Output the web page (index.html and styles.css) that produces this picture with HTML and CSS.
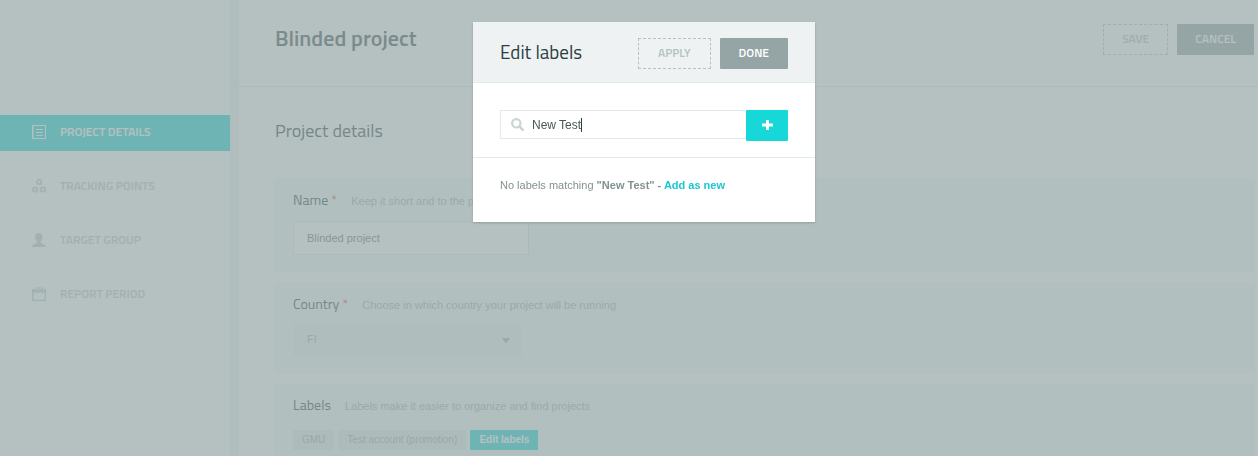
FILE: index.html
```html
<!DOCTYPE html>
<html lang="en">
<head>
    <meta charset="UTF-8">
    <meta name="viewport" content="width=device-width, initial-scale=1.0">
    <title>Blinded project</title>
    <link rel="stylesheet" href="styles.css">
</head>
<body class="modal-open">

    <div class="page">
        <nav class="sidebar">
            <a href="#details" class="nav-item active">
                <svg width="14" height="14" viewBox="0 0 14 14" fill="none" stroke="currentColor">
                    <path d="M.5.5h13v13H.5z"/>
                    <path d="M1.500 1v12" stroke-opacity=".5"/>
                    <path d="M4 4.500h7M4 7.500h7M4 10.500h7"/>
                </svg>
                Project details
            </a>
            <a href="#tracking" class="nav-item">
                <svg width="14" height="14" viewBox="0 0 14 14" fill="none" stroke="currentColor" stroke-width="1.8">
                    <circle cx="7.2" cy="3" r="2.2"/>
                    <circle cx="3.1" cy="10.500" r="2.2"/>
                    <circle cx="10.900" cy="10.500" r="2.2"/>
                </svg>
                Tracking points
            </a>
            <a href="#target" class="nav-item">
                <svg width="14" height="14" viewBox="0 0 14 14" fill="currentColor">
                    <path d="M6.7 0C9 0 10.400 1.500 10.400 4c0 2-.8 3.600-1.700 4.500v1.200c.5 1 5.300 1.300 5.300 4.300H0c0-3 4.500-3.300 5-4.300V8.500C4 7.600 3.200 6 3.200 4 3.200 1.500 4.500 0 6.700 0z"/>
                </svg>
                Target group
            </a>
            <a href="#period" class="nav-item">
                <svg width="14" height="14" viewBox="0 0 14 14" fill="currentColor">
                    <path fill-rule="evenodd" d="M0 2h3v1.500h1.500V2h2v1.500h1.500V2h2v1.500h1.500V2H14v12H0zM1.300 5.500v7.200h11.400V5.500z"/>
                    <path d="M3.700 0h1.400v2.500H3.700zM6.700 0h1.400v2.500H6.700zM9.700 0h1.400v2.500H9.700z"/>
                </svg>
                Report period
            </a>
        </nav>

        <main class="content">
            <header class="topbar">
                <h1>Blinded project</h1>
                <div class="actions">
                    <button type="button" class="btn btn-dashed">Save</button>
                    <button type="button" class="btn btn-solid">Cancel</button>
                </div>
            </header>

            <form class="details" id="details">
                <h2>Project details</h2>

                <div class="card">
                    <div class="card-head">
                        <label for="name">Name <span class="required">*</span></label>
                        <span class="hint">Keep it short and to the point</span>
                    </div>
                    <input type="text" id="name" name="name" class="text-input" value="Blinded project">
                </div>

                <div class="card">
                    <div class="card-head">
                        <label for="country">Country <span class="required">*</span></label>
                        <span class="hint">Choose in which country your project will be running</span>
                    </div>
                    <div class="select-wrap">
                        <select id="country" name="country">
                            <option>FI</option>
                        </select>
                        <svg width="8" height="5" viewBox="0 0 8 5" fill="currentColor"><path d="M0 0h8L4.500 5h-1z"/></svg>
                    </div>
                </div>

                <div class="card">
                    <div class="card-head">
                        <span class="card-title">Labels</span>
                        <span class="hint">Labels make it easier to organize and find projects</span>
                    </div>
                    <div class="tags">
                        <span class="tag">GMU</span>
                        <span class="tag">Test account (promotion)</span>
                        <button type="button" class="tag tag-edit">Edit labels</button>
                    </div>
                </div>
            </form>
        </main>
    </div>

    <div class="overlay">
        <div class="modal" role="dialog" aria-labelledby="modal-title">
            <header class="modal-head">
                <h3 id="modal-title">Edit labels</h3>
                <div class="actions">
                    <button type="button" class="btn btn-dashed">Apply</button>
                    <button type="button" class="btn btn-solid">Done</button>
                </div>
            </header>
            <div class="search-row">
                <label class="search">
                    <svg width="13" height="13" viewBox="0 0 13 13" fill="none" stroke="currentColor">
                        <circle cx="5.300" cy="5.300" r="4.200" stroke-width="2.200"/>
                        <path d="M8.500 8.500l3.300 3.300" stroke-width="2.600" stroke-linecap="round"/>
                    </svg>
                    <input type="text" id="label-search" aria-label="Search labels" value="New Test">
                    <span class="caret"></span>
                </label>
                <button type="button" class="btn-add" aria-label="Add label">
                    <svg width="11" height="10" viewBox="0 0 11 10" fill="none" stroke="currentColor" stroke-width="3"><path d="M5.500 0v10M0 5h11"/></svg>
                </button>
            </div>
            <p class="no-match">No labels matching <strong>"New Test" - <a href="#add">Add as new</a></strong></p>
        </div>
    </div>

</body>
</html>
```

FILE: styles.css
```css
* {
    box-sizing: border-box;
}
body {
    margin: 0;
    font-family: "Liberation Sans", Arial, sans-serif;
    font-size: 11px;
    color: #829191;
    background: #fff;
}
body.modal-open {
    height: 100vh;
    overflow: hidden;
}
h1, h2, h3, .btn, .nav-item, .card-head label, .card-title {
    font-family: "Titillium Web", Roboto, sans-serif;
}
h1, h2, h3 {
    margin: 0;
    font-weight: 400;
}
button, input, select {
    font-family: inherit;
    font-size: 11px;
    margin: 0;
}
.page {
    display: flex;
    min-height: 100vh;
}

/* sidebar */
.sidebar {
    flex: none;
    display: flex;
    flex-direction: column;
    gap: 18px;
    width: 239px;
    padding-top: 115px;
    border-right: 9px solid #ecf5f5;
}
.nav-item {
    display: flex;
    align-items: center;
    gap: 14px;
    height: 36px;
    padding: 0 32px 3px;
    font-size: 12px;
    font-weight: 600;
    text-transform: uppercase;
    text-decoration: none;
    color: #bdc9c9;
}
.nav-item.active {
    color: #fff;
    background: #16d8d8;
}

/* content */
.content {
    flex: 1;
    min-width: 0;
}
.topbar {
    display: flex;
    align-items: center;
    justify-content: space-between;
    height: 87px;
    padding: 0 4px 7px 36px;
    border-bottom: 1px solid #e2eaea;
}
h1 {
    padding-bottom: 3px;
    font-size: 22px;
    font-weight: 600;
    color: #3c4e50;
}
h2 {
    font-size: 18px;
    line-height: 24px;
    margin-bottom: 35px;
    color: #2c3e40;
}
.actions {
    display: flex;
    gap: 9px;
}
.btn {
    height: 31px;
    padding: 0 18px 2px;
    border: none;
    border-radius: 1px;
    font-size: 12px;
    font-weight: 600;
    text-transform: uppercase;
}
.btn-dashed {
    border: 1px dashed #b4c4c4;
    background: transparent;
    color: #b4c2c2;
}
.btn-solid {
    background: #95a5a5;
    color: #fff;
}
.details {
    padding: 32px 3px 20px 36px;
}
.card {
    padding: 12px 18px 18px;
    margin-bottom: 9px;
    background: #f2fafa;
}
.card-head {
    display: flex;
    align-items: center;
    gap: 14px;
    height: 20px;
    margin-bottom: 11px;
}
.card-head label, .card-title {
    padding-bottom: 2px;
    font-size: 14px;
    color: #2c3e40;
}
.required {
    color: #e74c3c;
}
.hint {
    padding-top: 2px;
    color: #a5b2b2;
}
.text-input {
    display: block;
    width: 236px;
    height: 34px;
    padding: 0 13px;
    border: 1px solid #dfe8e8;
    background: #fff;
    color: #5f6f6f;
}
.select-wrap {
    position: relative;
    width: 229px;
    color: #a0aeae;
}
.select-wrap select {
    display: block;
    width: 100%;
    height: 31px;
    padding: 0 14px 3px;
    border: none;
    border-radius: 2px;
    appearance: none;
    background: #ecf5f5;
    color: #a0aeae;
}
.select-wrap svg {
    position: absolute;
    right: 12px;
    top: 13px;
}
.tags {
    display: flex;
    gap: 4px;
    padding-top: 4px;
}
.tag {
    height: 20px;
    padding: 0 9px;
    border: none;
    font-size: 10px;
    line-height: 20px;
    background: #e5eded;
    color: #a0aeae;
}
.tag-edit {
    font-weight: bold;
    background: #16d8d8;
    color: #fff;
}

/* modal */
.overlay {
    position: fixed;
    inset: 0;
    display: flex;
    justify-content: center;
    align-items: flex-start;
    padding: 22px 0 0 30px;
    background: rgba(149, 165, 165, 0.7);
}
.modal {
    width: 342px;
    background: #fff;
    box-shadow: 0 1px 2px rgba(60, 80, 80, 0.3);
}
.modal-head {
    display: flex;
    align-items: center;
    justify-content: space-between;
    height: 61px;
    padding: 2px 27px 0;
    background: #eef2f3;
    border-bottom: 1px solid #e2eaea;
}
.modal-head .btn {
    padding: 0 19px 2px;
}
h3 {
    padding-bottom: 3px;
    font-size: 19px;
    color: #2c3e40;
}
.search-row {
    display: flex;
    align-items: flex-start;
    padding: 27px 27px 16px;
    border-bottom: 1px solid #e2eaea;
}
.search {
    flex: 1;
    display: flex;
    align-items: center;
    height: 29px;
    padding-left: 10px;
    border: 1px solid #e2eaea;
    border-right: none;
    color: #ccd4d4;
}
.search input {
    field-sizing: content;
    max-width: 200px;
    margin-left: 8px;
    padding: 0;
    border: none;
    outline: none;
    background: none;
    font-size: 12px;
    color: #4a5656;
    caret-color: transparent;
}
.caret {
    width: 1px;
    height: 14px;
    background: #2c3e40;
}
.btn-add {
    width: 42px;
    height: 31px;
    padding: 0;
    border: none;
    border-radius: 1px;
    background: #16d8d8;
    color: #fff;
}
.no-match {
    margin: 0;
    padding: 20px 27px 30px;
    line-height: 14px;
}
.no-match a {
    color: #1cc8d0;
    text-decoration: none;
}
```
